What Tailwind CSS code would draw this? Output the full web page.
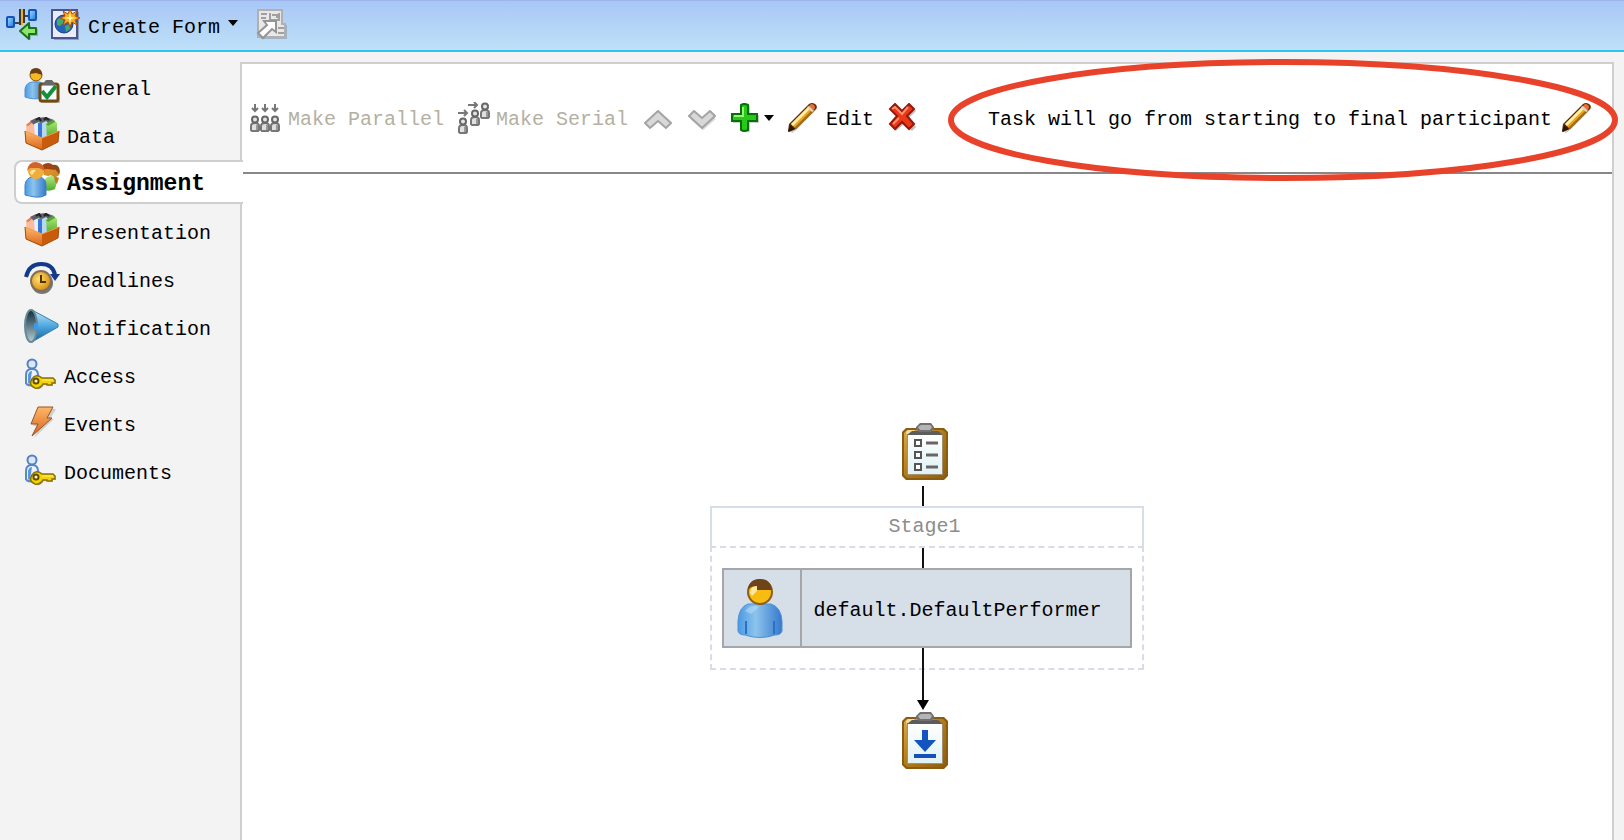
<!DOCTYPE html>
<html lang="en">
<head>
  <meta charset="UTF-8" />
  <meta name="viewport" content="width=device-width, initial-scale=1.0"/>
  <title>Human Task Editor</title>
  <script src="https://cdn.jsdelivr.net/npm/@tailwindcss/browser@4"></script>
</head>
<body class="min-h-screen flex flex-col bg-[#f3f3f3] text-black text-xl font-['Liberation_Mono',monospace]">

  <!-- Shared icon parts -->
  <svg class="absolute w-0 h-0" aria-hidden="true">
    <defs>
      <linearGradient id="blue" x1="0" y1="0" x2="1" y2="1"><stop offset="0" stop-color="#a4dcff"/><stop offset="1" stop-color="#1f78dc"/></linearGradient>
      <linearGradient id="body" x1="0" y1="0" x2="1" y2="0"><stop offset="0" stop-color="#4a9ae4"/><stop offset=".4" stop-color="#8cc4ec"/><stop offset="1" stop-color="#3579cc"/></linearGradient>
      <linearGradient id="gold" x1="0" y1="0" x2="1" y2="1"><stop offset="0" stop-color="#d8a84c"/><stop offset=".5" stop-color="#b07a18"/><stop offset="1" stop-color="#8e5c10"/></linearGradient>
      <linearGradient id="orange" x1="0" y1="0" x2="0" y2="1"><stop offset="0" stop-color="#ffb868"/><stop offset="1" stop-color="#d8641c"/></linearGradient>
      <linearGradient id="green" x1="0" y1="0" x2="0" y2="1"><stop offset="0" stop-color="#b4e880"/><stop offset="1" stop-color="#4cac28"/></linearGradient>
      <linearGradient id="paper" x1="0" y1="0" x2="0" y2="1"><stop offset="0" stop-color="#ffffff"/><stop offset="1" stop-color="#dff2f6"/></linearGradient>
      <linearGradient id="cone" x1="0" y1="0" x2="0" y2="1"><stop offset="0" stop-color="#c4e8f8"/><stop offset=".5" stop-color="#4ea8e0"/><stop offset="1" stop-color="#14609c"/></linearGradient>
      <linearGradient id="mouth" x1="0" y1="0" x2="0" y2="1"><stop offset="0" stop-color="#0e2c3c"/><stop offset="1" stop-color="#b4ccd4"/></linearGradient>
      <radialGradient id="clock" cx=".4" cy=".4" r=".6"><stop offset="0" stop-color="#ffe070"/><stop offset="1" stop-color="#d88e10"/></radialGradient>
      <symbol id="pencil" viewBox="0 0 32 32">
        <path d="M5 30 9 27 31 5" stroke="#000" stroke-opacity=".2" stroke-width="3" fill="none"/>
        <path d="M2 29 3 22 23 2Q26 0 29 2T30 7L10 27 3 30Z" fill="#5c3008"/>
        <path d="M5 22 22 5 26 9 9 26Z" fill="#eda61c"/>
        <path d="M5 22 22 5 24 7 7 24Z" fill="#fff0b0"/>
        <path d="M8 26 26 8 28 9 10 27Z" fill="#a86c10"/>
        <path d="M22 5 25 2Q29 2 29 6L27 9Z" fill="#e87030"/>
        <path d="M21 5 23 4 28 9 26 10Z" fill="#e4d4c4"/>
        <path d="M4 23 9 27 2 30Z" fill="#2c1804"/>
      </symbol>
      <symbol id="box" viewBox="0 0 36 34">
        <path d="M2 8 7 4 11 6V20H3Z" fill="#f8bca0"/><path d="M2 8 7 4 8 6 4 9Z" fill="#e07c50"/>
        <path d="M6 4 12 1 22 0 30 3 29 8 12 10Z" fill="#606064"/>
        <path d="M10 7 15 5 18 7V22H11Z" fill="#e4eefc"/><path d="M14 6 18 5V22H14Z" fill="#3878d4"/>
        <path d="M18 6 22 4 24 6V22H18Z" fill="#b8d8f8"/>
        <path d="M22 7 30 3 33 6V18L23 21Z" fill="url(#green)"/><path d="M22 7 30 3 31 5 24 9Z" fill="#48a828"/>
        <path d="M12 3 15 1 17 4M20 3 22 1 25 3" stroke="#222" stroke-width="2" fill="none"/>
        <path d="M1 14 18 21 35 14 34 25 18 33 2 26Z" fill="#c85c0c"/>
        <path d="M1 14 18 21V33L2 26Z" fill="url(#orange)"/>
        <path d="M1 14 18 21 35 14" stroke="#f0a048" fill="none"/><path d="M1 14 2 26 18 33 34 25 35 14" stroke="#a84c04" fill="none"/>
      </symbol>
      <symbol id="access" viewBox="0 0 32 32">
        <path d="M2 26V17Q2 11 8 11T14 17L13 26Q8 29 2 26" fill="#eef4ff" stroke="#5688cc" stroke-width="2"/>
        <path d="M4 25V17Q5 13 8 13L6 26" fill="#5c94e0"/>
        <circle cx="8" cy="6" r="4.500" fill="#d8e8ff" stroke="#5480c4" stroke-width="2"/>
        <path d="M9 21Q13 16 19 21H30L32 23V26H29V28H24V27H20Q17 32 12 31 5 28 9 21Z" fill="#000" fill-opacity=".2"/>
        <path d="M8 21Q12 15 18 20H29L31 22V25H28V27H23V26H19Q16 31 11 30 4 27 8 21Z" fill="#f4d400" stroke="#8c7000" stroke-width="1.500"/>
        <circle cx="12" cy="23" r="2.500" fill="#fff8c0" stroke="#604c00" stroke-width="2"/><path d="M18 22H29" stroke="#fff080"/>
      </symbol>
      <symbol id="clipboard" viewBox="0 0 46 57">
        <path d="M4 5H42L46 9V53L42 57H4L0 53V9Z" fill="#8a5c10"/>
        <path d="M5 7H41L44 10V52L41 55H5L2 52V10Z" fill="url(#gold)"/>
        <path d="M4 9 6 7H13L5 14Z" fill="#f4dca0"/>
        <path d="M5 11H41V52H5Z" fill="#a4906c"/>
        <path d="M6 12H40V51H6Z" fill="url(#paper)"/>
        <path d="M5 12 10 8H36L41 12Z" fill="#5c5c5c"/>
        <path d="M14 4 18 0H29L32 4V6L29 9H17L14 6Z" fill="#707070"/>
        <path d="M16 4 19 2H28L30 4 28 7H18Z" fill="#b4b4b4"/>
      </symbol>
      <symbol id="chip" viewBox="0 0 10 17">
        <path d="M1 15V11Q1 8 5 8T9 11V15L8 16H2Z" fill="#e0e0e0" stroke="#777" stroke-width="2"/>
        <path d="M6 10H8V15H6Z" fill="#999"/>
        <circle cx="5" cy="4.500" r="3" fill="#e4e4e4" stroke="#666" stroke-width="2"/>
      </symbol>
    </defs>
  </svg>

  <!-- Top bar -->
  <header class="h-[52px] shrink-0 flex items-center pt-1 pl-[6px] border-t border-t-[#9db5ec] border-b-2 border-b-[#30c4f0] bg-linear-to-b from-[#a9c7f6] to-[#bfe0f8]">
    <button aria-label="Show hierarchy" class="mr-3 -mt-2">
      <svg class="w-8 h-8" viewBox="0 0 32 32">
        <path d="M8 15H14M18 8H24" stroke="#444" stroke-width="2"/>
        <rect x="1" y="9" width="7" height="10" rx="1" fill="url(#blue)" stroke="#1454b8" stroke-width="2"/>
        <rect x="23" y="2" width="7" height="10" rx="1" fill="url(#blue)" stroke="#1454b8" stroke-width="2"/>
        <path d="M14 1V17M18 1V15" stroke="#383838" stroke-width="2"/>
        <path d="M15 1H17V17H15Z" fill="#e8b020"/>
        <path d="M16 24 25 17V21H32V28H25V32Z" fill="#000" fill-opacity=".2"/>
        <path d="M14 23 23 15V20H30V26H23V31Z" fill="#8ce468" stroke="#187418" stroke-width="2" stroke-linejoin="round"/>
      </svg>
    </button>
    <button class="flex items-center gap-2">
      <svg class="w-[30px] h-8 -mt-2" viewBox="0 0 30 32">
        <path d="M4 4H29V32H4Z" fill="#000" fill-opacity=".25"/>
        <rect x="2" y="2" width="25" height="28" fill="#e8ecfc" stroke="#4c5490" stroke-width="2"/>
        <circle cx="14" cy="16" r="9" fill="#2464b8" stroke="#144080"/>
        <path d="M7 12Q11 8 14 9L13 15 10 18 7 17ZM15 18 20 16 20 21 16 24Z" fill="#48a868"/>
        <path d="M20 1 22 6 27 3 25 8 30 10 25 12 27 17 22 14 20 19 18 14 13 17 15 12 10 10 15 8 13 3 18 6Z" fill="#f8b020" stroke="#b04c08"/>
        <path d="M20 4 21 9 26 10 21 11 20 16 19 11 14 10 19 9Z" fill="#fff8a0"/>
      </svg>
      <span>Create Form</span>
      <svg class="w-[10px] h-[7px] -mt-2" viewBox="0 0 10 7"><path d="M0 0H10L5 6Z"/></svg>
    </button>
    <button disabled aria-label="Open form" class="ml-[18px] -mt-2">
      <svg class="w-8 h-8" viewBox="0 0 32 32">
        <path d="M5 28H27V17H31V31H5Z" fill="#888" fill-opacity=".5"/>
        <path d="M2 2H26V16H29V29H2Z" fill="#e8e8e8" stroke="#b0b0b0" stroke-width="2"/>
        <path d="M5 6H11M14 5V12H22M16 7H21V10M5 10H10M23 5V13M22 20H28M22 25H28" stroke="#a0a0a0" stroke-width="2" fill="none"/>
        <path d="M8 13H20V24L16 21 7 30 2 25 11 17Z" fill="#fff" stroke="#949494" stroke-width="2"/>
      </svg>
    </button>
  </header>

  <div class="flex-1 flex pt-[10px]">

    <!-- Side tabs -->
    <nav class="w-60 shrink-0 flex flex-col pt-1 pl-[14px]">
      <a href="#general" class="h-12 flex items-center gap-[7px] pl-[10px]">
        <svg class="w-9 h-9 -mt-2" viewBox="0 0 36 36">
          <path d="M1 29V21Q2 15 8 14H16Q20 15 20 20V30Q9 32 1 29" fill="url(#body)" stroke="#4c90d8"/>
          <circle cx="12" cy="7" r="6" fill="#f4b820" stroke="#7c4c10"/><path d="M6 6Q6 0 12 0T18 7L12 5Z" fill="#6c4014"/>
          <path d="M17 18H34L36 35H17Z" fill="#000" fill-opacity=".25"/>
          <rect x="16" y="16" width="18" height="17" rx="2" fill="#f8fcff" stroke="#74490c" stroke-width="3"/>
          <path d="M18 17 22 12H28L32 17Z" fill="#686868"/>
          <path d="M18 23 23 29 32 18" stroke="#14903c" stroke-width="4" fill="none"/>
        </svg>
        General
      </a>
      <a href="#data" class="h-12 flex items-center gap-[7px] pl-[10px]">
        <svg class="w-9 h-[34px] -mt-2"><use href="#box"/></svg>
        Data
      </a>
      <a href="#assignment" aria-current="page" class="relative z-10 h-11 -mt-0.5 mb-1.5 -mr-[3px] pt-1 flex items-center gap-[7px] pl-2 text-[23px] font-bold bg-white border-2 border-r-0 border-[#cfcfcf] rounded-l-lg">
        <svg class="w-9 h-9 -mt-2" viewBox="0 0 36 36">
          <path d="M20 28V19Q22 14 28 14 34 14 33 20L31 27Q26 30 20 28" fill="url(#green)"/>
          <circle cx="31" cy="10" r="5" fill="#d08c2c"/><path d="M26 7Q27 2 32 3 37 5 35 12L31 7Z" fill="#884c18"/>
          <circle cx="24" cy="8" r="6" fill="#dc9028"/><path d="M17 7Q18 1 24 1T31 8L24 7Z" fill="#a04414"/>
          <path d="M30 14 35 16 33 22 31 20Z" fill="#c07c20"/>
          <path d="M1 33V23Q2 16 8 15H15Q22 16 22 23V33Q17 36 11 35T1 33" fill="url(#body)" stroke="#3c80c8"/>
          <circle cx="12" cy="9" r="8" fill="#f0ac3c"/><path d="M3 9Q4 0 12 0 20 1 21 9L15 6 6 6Z" fill="#d0642c"/>
          <path d="M6 11Q7 7 12 8L8 13Z" fill="#fce4a0"/>
        </svg>
        Assignment
      </a>
      <a href="#presentation" class="h-12 flex items-center gap-[7px] pl-[10px]">
        <svg class="w-9 h-[34px] -mt-2"><use href="#box"/></svg>
        Presentation
      </a>
      <a href="#deadlines" class="h-12 flex items-center gap-[7px] pl-[10px]">
        <svg class="w-9 h-[34px] -mt-2" viewBox="0 0 36 34">
          <circle cx="18" cy="22" r="11" fill="#777"/><circle cx="17" cy="20" r="10" fill="url(#clock)" stroke="#807058" stroke-width="2"/>
          <path d="M17 14V21H22" stroke="#503400" stroke-width="2" fill="none"/>
          <path d="M2 16Q5 3 17 3T31 14" stroke="#14388c" stroke-width="4" fill="none"/><path d="M26 13H36L31 20Z" fill="#14388c"/>
        </svg>
        Deadlines
      </a>
      <a href="#notification" class="h-12 flex items-center gap-[7px] pl-[10px]">
        <svg class="w-9 h-[34px] -mt-2" viewBox="0 0 36 34">
          <path d="M8 1 34 15V18L8 33Z" fill="url(#cone)" stroke="#3c80a8"/>
          <ellipse cx="7" cy="17" rx="6" ry="16" fill="url(#mouth)" stroke="#688894" stroke-width="2"/>
          <path d="M10 14H14V20H10Z" fill="#3c98e8"/>
        </svg>
        Notification
      </a>
      <a href="#access" class="h-12 flex items-center gap-2 pl-[10px]">
        <svg class="w-8 h-8 -mt-2"><use href="#access"/></svg>
        Access
      </a>
      <a href="#events" class="h-12 flex items-center gap-2 pl-[10px]">
        <svg class="w-8 h-8 -mt-2" viewBox="0 0 32 32">
          <path d="M16 3H32L26 13H30L10 32 16 20H9Z" fill="#000" fill-opacity=".15"/>
          <path d="M14 1H29L23 12H28L8 30 14 18H7Z" fill="url(#orange)" stroke="#945428"/>
        </svg>
        Events
      </a>
      <a href="#documents" class="h-12 flex items-center gap-2 pl-[10px]">
        <svg class="w-8 h-8 -mt-2"><use href="#access"/></svg>
        Documents
      </a>
    </nav>

    <!-- Assignment panel -->
    <main class="flex-1 min-w-0 flex flex-col mr-[10px] bg-white border-2 border-b-0 border-[#cfcfcf]">
      <div class="relative h-[110px] shrink-0 flex items-center justify-between pt-1 pl-[7px] pr-5 ml-px border-b-2 border-[#888888]">
        <div class="flex items-center">
          <button disabled class="flex items-center gap-1.5 text-[#b4b0a2]">
            <svg class="w-8 h-[30px] -mt-1" viewBox="0 0 32 30">
              <path d="M5 1V8M2 5 5 8 8 5M15 1V8M12 5 15 8 18 5M25 1V8M22 5 25 8 28 5" stroke="#777" stroke-width="2" fill="none"/>
              <use href="#chip" x="0" y="12" width="10" height="17"/><use href="#chip" x="10" y="12" width="10" height="17"/><use href="#chip" x="20" y="12" width="10" height="17"/>
            </svg>
            Make Parallel
          </button>
          <button disabled class="flex items-center gap-1.5 ml-3.5 text-[#b4b0a2]">
            <svg class="w-8 h-8 -mt-1" viewBox="0 0 32 32">
              <path d="M10 3H19M16 0 19 3 16 6M0 11H9M6 8 9 11 6 14" stroke="#777" stroke-width="2" fill="none"/>
              <use href="#chip" x="0" y="15" width="10" height="17"/><use href="#chip" x="12" y="7" width="10" height="17"/><use href="#chip" x="22" y="0" width="10" height="17"/>
            </svg>
            Make Serial
          </button>
          <button disabled aria-label="Move up" class="ml-4">
            <svg class="w-7 h-5" viewBox="0 0 28 20"><path d="M5 15 14 6 24 16" stroke="#000" stroke-opacity=".15" stroke-width="8" fill="none"/><path d="M1 13 14 1 27 13 22 18 14 11 6 18Z" fill="#d8d8d8" stroke="#a4a4a4" stroke-width="2"/></svg>
          </button>
          <button disabled aria-label="Move down" class="ml-4">
            <svg class="w-7 h-5" viewBox="0 0 28 20"><path d="M5 6 15 15 25 6" stroke="#000" stroke-opacity=".15" stroke-width="8" fill="none"/><path d="M1 6 6 1 14 8 22 1 27 6 14 18Z" fill="#d8d8d8" stroke="#a4a4a4" stroke-width="2"/></svg>
          </button>
          <button aria-label="Add" class="flex items-center gap-1 ml-3.5 -mt-1">
            <svg class="w-[30px] h-[30px]" viewBox="0 0 30 30">
              <path d="M12 3H20V12H29V20H20V29H12V20H3V12H12Z" fill="#000" fill-opacity=".2"/>
              <path d="M11 2Q14 0 18 2V11H27V18H18V27Q14 29 11 27V18H2V11H11Z" fill="#28c818" stroke="#087008" stroke-width="2"/>
              <path d="M13 4V13H4" stroke="#98f478" stroke-width="2" fill="none"/>
            </svg>
            <svg class="w-[10px] h-[6px]" viewBox="0 0 10 6"><path d="M0 0H10L5 6Z"/></svg>
          </button>
          <button class="flex items-center gap-2 ml-3">
            <svg class="w-8 h-8 -mt-1"><use href="#pencil"/></svg>
            Edit
          </button>
          <button aria-label="Delete" class="ml-3.5 -mt-1">
            <svg class="w-[30px] h-[30px]" viewBox="0 0 30 30">
              <path d="M5 8 9 4 16 10 24 4 28 8 21 15 28 24 24 28 16 21 8 28 4 24 11 15Z" fill="#000" fill-opacity=".25"/>
              <path d="M2 6 7 1 14 8 21 1 26 6 19 13 26 21 21 26 14 19 7 26 2 21 9 13Z" fill="#ec3818" stroke="#941808" stroke-width="2"/>
              <path d="M4 6 7 4 14 11 20 4M5 21 11 15" stroke="#fc9070" stroke-width="2" fill="none"/>
            </svg>
          </button>
        </div>
        <div class="flex items-center gap-2">
          <span>Task will go from starting to final participant</span>
          <button aria-label="Edit routing"><svg class="w-8 h-8 -mt-1"><use href="#pencil"/></svg></button>
        </div>
        <!-- Highlight around the routing text -->
        <svg class="absolute -right-[6px] -top-[6px] w-[670px] h-[124px] pointer-events-none" viewBox="0 0 670 124">
          <ellipse cx="335" cy="62" rx="332" ry="58" fill="none" stroke="#e8432a" stroke-width="6"/>
        </svg>
      </div>

      <!-- Task flow -->
      <div class="flex flex-col items-center pt-[249px] pr-px pb-16">
        <svg class="w-[50px] h-[57px]" viewBox="0 0 50 57">
          <use href="#clipboard" width="46" height="57"/>
          <path d="M13 17H19V23H13ZM13 29H19V35H13ZM13 41H19V47H13Z" fill="#fff" stroke="#555" stroke-width="2"/>
          <path d="M24 20H36M24 32H36M24 44H36" stroke="#666" stroke-width="3"/>
        </svg>
        <svg class="w-[10px] h-5 mt-[6px]" viewBox="0 0 10 20"><path d="M0 0H2V20H0Z" fill="#111"/></svg>
        <section class="w-[434px] flex flex-col items-center">
          <h2 class="w-full h-10 flex items-center justify-center pr-1 border-2 border-b-0 border-[#d8dee8] text-[#8c8c8c]">Stage1</h2>
          <div class="w-full flex flex-col items-center border-2 border-dashed border-[#d8dce8]">
            <svg class="w-[10px] h-5" viewBox="0 0 10 20"><path d="M0 0H2V20H0Z" fill="#111"/></svg>
            <button class="w-[410px] h-20 flex items-stretch text-left bg-[#d6dee8] border-2 border-[#a4a6aa]">
              <span class="w-[78px] flex items-center justify-center pr-1 border-r-2 border-[#a4a6aa]">
                <svg class="w-[46px] h-[60px]" viewBox="0 0 46 60">
                  <path d="M1 53V43Q2 29 11 26H34Q44 29 45 43V53Q44 57 38 57 23 62 8 57 2 57 1 53Z" fill="url(#body)" stroke="#4c90d8"/>
                  <path d="M9 43V56M37 43V56" stroke="#2c70c0" stroke-width="2"/>
                  <path d="M8 33Q14 26 22 29L14 36Z" fill="#b4dcf8" fill-opacity=".6"/>
                  <circle cx="23" cy="14" r="12" fill="#f8bc10" stroke="#8c6018" stroke-width="2"/>
                  <path d="M13 15Q14 7 20 8V13L15 18Z" fill="#fce8a0"/>
                  <path d="M11 12Q12 1 23 1T35 12L20 12V8Q14 8 11 12" fill="#6c4418"/>
                </svg>
              </span>
              <span class="flex items-center pt-1.5 pl-3">default.DefaultPerformer</span>
            </button>
            <div class="h-5"></div>
          </div>
        </section>
        <svg class="w-5 h-[62px] -mt-[22px] relative" viewBox="0 0 20 62"><path d="M5 0H7V54H5Z" fill="#111"/><path d="M0 52H12L6 62Z"/></svg>
        <svg class="w-[50px] h-[57px] mt-[2px]" viewBox="0 0 50 57">
          <use href="#clipboard" width="46" height="57"/>
          <path d="M20 18H26V28H34L23 40 12 28H20Z" fill="#1454c0"/><path d="M12 42H34V46H12Z" fill="#1450b8"/>
        </svg>
      </div>
    </main>
  </div>
</body>
</html>
